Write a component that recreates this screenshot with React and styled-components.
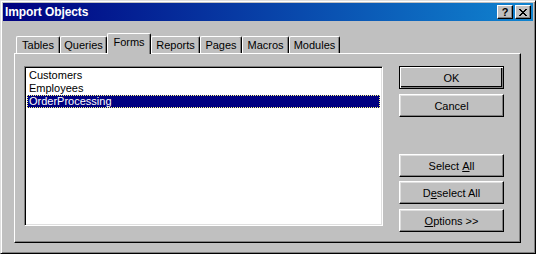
import React from 'react';
import styled, { createGlobalStyle, css } from 'styled-components';

const GlobalStyle = createGlobalStyle`
    html, body {
        margin: 0;
        padding: 0;
        background: #c0c0c0;
    }
    * {
        box-sizing: border-box;
    }
`;

const StyledWindow = styled.div`
    width: 536px;
    height: 254px;
    padding: 2px;
    background: #c0c0c0;
    border: 1px solid;
    border-color: #dfdfdf #000 #000 #dfdfdf;
    box-shadow: inset 1px 1px #fff, inset -1px -1px #808080;
    font-family: "Liberation Sans", Arial, sans-serif;
    font-size: 11px;
    color: #000;
    display: flex;
    flex-direction: column;
`;

const StyledTitleBar = styled.div`
    height: 18px;
    display: flex;
    align-items: center;
    padding: 0 2px 0 2px;
    background: linear-gradient(to right, #000080, #1084d0);
`;

const StyledTitle = styled.span`
    flex: 1;
    color: #fff;
    font-weight: 700;
    font-size: 12px;
    letter-spacing: -0.1px;
`;

const StyledCaptionButton = styled.div`
    width: 16px;
    height: 14px;
    margin-left: 2px;
    background: #c0c0c0;
    border-top: 1px solid #fff;
    border-left: 1px solid #fff;
    border-right: 1px solid #000;
    border-bottom: 1px solid #000;
    box-shadow: inset -1px -1px #808080;
    display: flex;
    align-items: center;
    justify-content: center;
    font-weight: 700;
    font-size: 11px;
    line-height: 1;
`;

const StyledBody = styled.div`
    flex: 1;
    padding: 12px 12px 8px 11px;
    display: flex;
    flex-direction: column;
`;

const StyledTabRow = styled.div`
    height: 20px;
    display: flex;
    align-items: flex-end;
    padding-left: 2px;
    position: relative;
    z-index: 1;
`;

const StyledTab = styled.div`
    width: ${props => props.w}px;
    height: 17px;
    display: flex;
    align-items: center;
    justify-content: center;
    background: #c0c0c0;
    border-top: 1px solid #fff;
    border-left: 1px solid #fff;
    border-right: 1px solid #000;
    border-radius: 2px 2px 0 0;
    box-shadow: inset -1px 0 #808080;
    padding-bottom: 1px;
    ${props =>
        props.active && css`
            height: 21px;
            margin-bottom: -1px;
            padding-bottom: 4px;
        `
    }
`;

const StyledPanel = styled.div`
    height: 190px;
    display: flex;
    padding: 12px 0 0 9px;
    border-top: 1px solid #fff;
    border-left: 1px solid #fff;
    border-right: 1px solid #000;
    border-bottom: 1px solid #000;
    box-shadow: inset -1px -1px #808080;
`;

const StyledListBox = styled.div`
    width: 359px;
    height: 160px;
    background: #fff;
    border: 1px solid;
    border-color: #808080 #fff #fff #808080;
    box-shadow: inset 1px 1px #000, inset -1px -1px #dfdfdf;
    padding: 2px 2px;
`;

const StyledListItem = styled.div`
    height: 13px;
    line-height: 13px;
    padding-left: 2px;
    white-space: nowrap;
    ${props =>
        props.selected && css`
            background: #000080;
            color: #fff;
            outline: 1px dotted #ffff80;
            outline-offset: -1px;
        `
    }
`;

const StyledButtonColumn = styled.div`
    display: flex;
    flex-direction: column;
    margin-left: 16px;
`;

const StyledButton = styled.div`
    width: 105px;
    height: 23px;
    margin-top: ${props => props.gap || 0}px;
    display: flex;
    align-items: center;
    justify-content: center;
    background: #c0c0c0;
    border-top: 1px solid #fff;
    border-left: 1px solid #fff;
    border-right: 1px solid #000;
    border-bottom: 1px solid #000;
    box-shadow: inset -1px -1px #808080, inset 1px 1px #dfdfdf;
    ${props =>
        props.primary && css`
            border: 1px solid #000;
            box-shadow: inset 1px 1px #fff, inset -1px -1px #808080, inset -2px -2px #000;
        `
    }
    u {
        text-decoration: underline;
        text-underline-offset: 1px;
    }
`;

const tabs = [
    { label: 'Tables', w: 44 },
    { label: 'Queries', w: 47 },
    { label: 'Forms', w: 44, active: true },
    { label: 'Reports', w: 49 },
    { label: 'Pages', w: 42 },
    { label: 'Macros', w: 47 },
    { label: 'Modules', w: 51 },
];

const items = ['Customers', 'Employees', 'OrderProcessing'];

const CloseGlyph = () => (
    <svg width="8" height="7" viewBox="0 0 8 7" shapeRendering="crispEdges">
        <path d="M0 0h2v1h-2zM6 0h2v1h-2zM1 1h2v1h-2zM5 1h2v1h-2zM2 2h4v1h-4zM3 3h2v1h-2zM2 4h4v1h-4zM1 5h2v1h-2zM5 5h2v1h-2zM0 6h2v1h-2zM6 6h2v1h-2z" fill="#000" />
    </svg>
);

const App = () => {
    return (
        <>
            <GlobalStyle />
            <StyledWindow>
                <StyledTitleBar>
                    <StyledTitle>Import Objects</StyledTitle>
                    <StyledCaptionButton>?</StyledCaptionButton>
                    <StyledCaptionButton><CloseGlyph /></StyledCaptionButton>
                </StyledTitleBar>
                <StyledBody>
                    <StyledTabRow>
                        {tabs.map(t => (
                            <StyledTab key={t.label} w={t.w} active={t.active ? 1 : 0}>{t.label}</StyledTab>
                        ))}
                    </StyledTabRow>
                    <StyledPanel>
                        <StyledListBox>
                            {items.map((item, i) => (
                                <StyledListItem key={item} selected={i === 2}>{item}</StyledListItem>
                            ))}
                        </StyledListBox>
                        <StyledButtonColumn>
                            <StyledButton primary>OK</StyledButton>
                            <StyledButton gap={5}>Cancel</StyledButton>
                            <StyledButton gap={37}>Select&nbsp;<u>A</u>ll</StyledButton>
                            <StyledButton gap={4}>D<u>e</u>select All</StyledButton>
                            <StyledButton gap={5}><u>O</u>ptions &gt;&gt;</StyledButton>
                        </StyledButtonColumn>
                    </StyledPanel>
                </StyledBody>
            </StyledWindow>
        </>
    );
};

export default App;
